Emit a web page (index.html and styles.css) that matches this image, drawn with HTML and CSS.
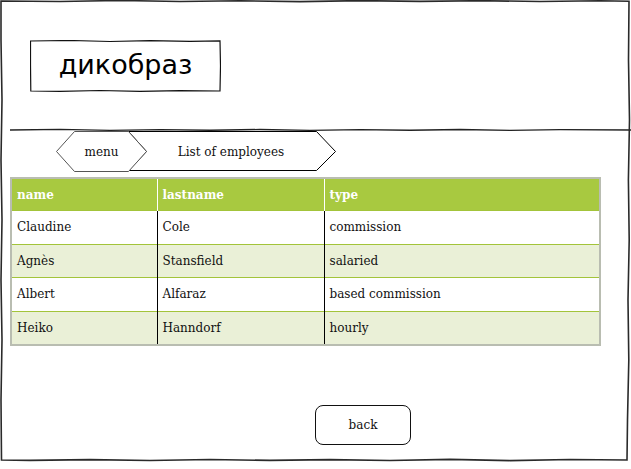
FILE: index.html
```html
<!DOCTYPE html>
<html>
<head>
<meta charset="utf-8">
<link rel="stylesheet" href="styles.css">
</head>
<body>
<div class="frame">
  <svg class="frame-edge" width="631" height="469" viewBox="0 0 631 469">
    <path d="M1 1 L60 1.5 L120 0.5 L180 1.5 L240 0.8 L300 1.6 L360 0.6 L420 1.4 L480 0.7 L540 1.5 L600 0.8 L629 1.2 L628.5 60 L629.5 120 L628.4 180 L629.2 240 L628 300 L628.8 360 L627.5 420 L627 460 L570 459.5 L510 460.6 L450 459.4 L390 460.5 L330 459.6 L270 460.4 L210 459.5 L150 460.5 L90 459.6 L30 460.4 L1.5 460 L1 400 L2 340 L1 280 L2 220 L1 160 L2 100 L1 40 Z" />
  </svg>
  <header class="masthead">
    <div class="logo-box">
      <svg class="sketch" width="191" height="52" viewBox="0 0 191 52">
        <path d="M0.5 1 L40 0.5 L80 1.5 L120 0.6 L160 1.4 L190 0.8 L190.5 26 L190 51 L150 50.6 L110 51.4 L70 50.5 L30 51.3 L0.8 51 L0.5 25 Z"/>
      </svg>
      <span class="logo-text">дикобраз</span>
    </div>
  </header>
  <svg class="divider" width="621" height="4" viewBox="0 0 621 4">
    <path d="M0 2 L50 1.4 L100 2.4 L150 1.6 L200 2.3 L250 1.5 L300 2.4 L350 1.6 L400 2.3 L450 1.5 L500 2.4 L550 1.6 L621 2"/>
  </svg>
  <nav class="crumbs">
    <div class="crumb crumb-menu">
      <svg class="crumb-shape" width="91" height="41" viewBox="0 0 91 41">
        <polygon points="0.5,20.5 18.5,0.5 72.5,0.5 90.5,20.5 72.5,40.5 18.5,40.5"/>
      </svg>
      <span class="crumb-label">menu</span>
    </div>
    <div class="crumb crumb-page">
      <svg class="crumb-shape" width="226" height="41" viewBox="0 0 226 41">
        <polygon points="18.5,0.5 206.5,0.5 225.5,20.5 206.5,39.5 18.5,39.5 36.5,20.5"/>
      </svg>
      <span class="crumb-label">List of employees</span>
    </div>
  </nav>
  <table class="grid">
    <colgroup>
      <col class="c1"><col class="c2"><col class="c3">
    </colgroup>
    <thead>
      <tr><th>name</th><th>lastname</th><th>type</th></tr>
    </thead>
    <tbody>
      <tr><td>Claudine</td><td>Cole</td><td>commission</td></tr>
      <tr class="alt"><td>Agnès</td><td>Stansfield</td><td>salaried</td></tr>
      <tr><td>Albert</td><td>Alfaraz</td><td>based commission</td></tr>
      <tr class="alt"><td>Heiko</td><td>Hanndorf</td><td>hourly</td></tr>
    </tbody>
  </table>
  <div class="actions">
    <button class="back-btn">back</button>
  </div>
</div>
</body>
</html>
```

FILE: styles.css
```css
html, body {
  margin: 0;
  padding: 0;
  background: #fff;
}
body {
  width: 631px;
  height: 469px;
  overflow: hidden;
  font-family: "DejaVu Serif", serif;
  color: #111;
}
.frame {
  position: relative;
  width: 631px;
  height: 469px;
  display: flex;
  flex-direction: column;
}
.frame-edge {
  position: absolute;
  left: 0;
  top: 0;
  pointer-events: none;
}
.frame-edge path {
  fill: none;
  stroke: #2a2a2a;
  stroke-width: 1.6;
}
.masthead {
  padding: 40px 0 0 30px;
  height: 90px;
  box-sizing: border-box;
}
.logo-box {
  position: relative;
  width: 191px;
  height: 52px;
  display: flex;
  align-items: center;
  justify-content: center;
}
.sketch {
  position: absolute;
  left: 0;
  top: 0;
}
.sketch path {
  fill: none;
  stroke: #111;
  stroke-width: 1.2;
}
.logo-text {
  position: relative;
  font-family: "DejaVu Sans", sans-serif;
  font-size: 27px;
  color: #000;
  margin-top: -3px;
}
.divider {
  display: block;
  margin: 38px 0 0 10px;
}
.divider path {
  fill: none;
  stroke: #222;
  stroke-width: 1.4;
}
.crumbs {
  display: flex;
  margin: -1px 0 0 56px;
  height: 41px;
}
.crumb {
  position: relative;
  height: 41px;
  display: flex;
  align-items: center;
  justify-content: center;
  font-size: 12px;
}
.crumb-shape {
  position: absolute;
  left: 0;
  top: 0;
}
.crumb-shape polygon {
  fill: #fff;
  stroke-width: 1;
}
.crumb-menu {
  width: 91px;
  z-index: 2;
}
.crumb-menu polygon {
  stroke: #555;
}
.crumb-page {
  width: 226px;
  margin-left: -37px;
  z-index: 1;
  padding: 0 20px 0 36px;
  box-sizing: border-box;
}
.crumb-page polygon {
  stroke: #000;
}
.crumb-label {
  position: relative;
  margin-top: 1px;
}
.grid {
  margin: 5px 0 0 10px;
  width: 591px;
  border-collapse: collapse;
  border: 2px solid #b9bdb1;
  font-size: 12px;
  table-layout: fixed;
}
.c1 { width: 146px; }
.c2 { width: 167px; }
.grid th, .grid td {
  text-align: left;
  padding: 0 5px;
}
.grid th {
  background: #a8c940;
  color: #fff;
  font-weight: bold;
  border-left: 1px solid #fff;
  height: 31px;
}
.grid th:first-child,
.grid td:first-child {
  border-left: none;
}
.grid td {
  border-left: 1px solid #000;
  border-top: 1px solid #a3c43a;
  background: #fff;
  height: 32.5px;
}
.grid tr.alt td {
  background: #eaf0d7;
}
.actions {
  margin: 59px 0 0 315px;
}
.back-btn {
  width: 96px;
  height: 40px;
  border: 1px solid #111;
  border-radius: 8px;
  background: #fff;
  font-family: "DejaVu Serif", serif;
  font-size: 12px;
  color: #111;
  padding: 0;
  margin: 0;
}
```
